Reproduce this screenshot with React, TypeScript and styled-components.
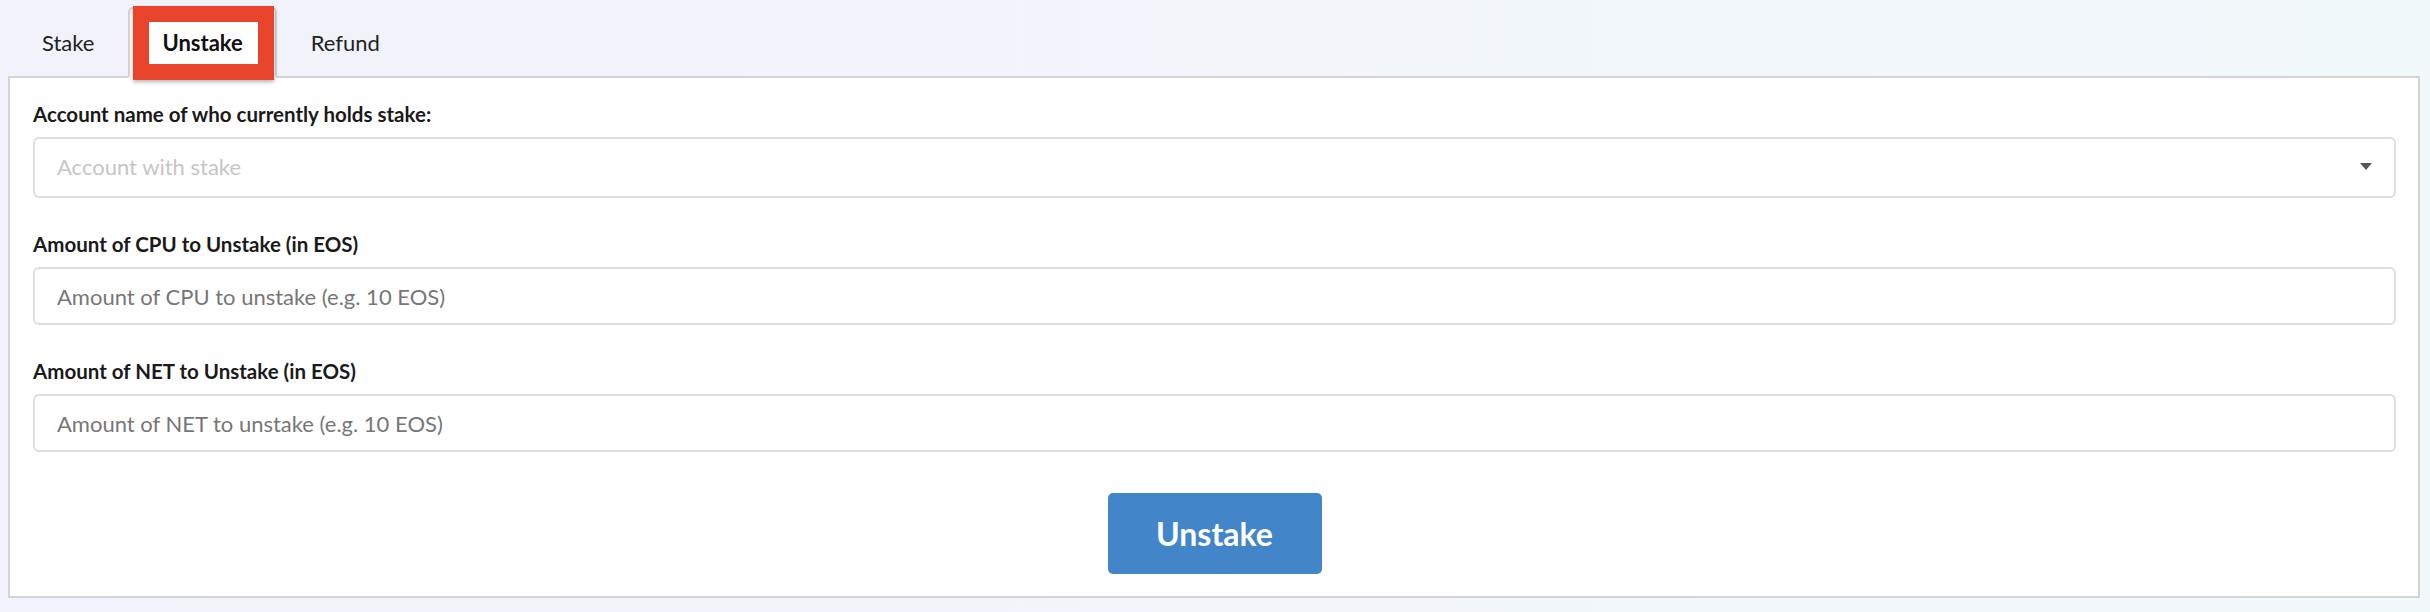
import React, { useState } from "react";
import styled, { createGlobalStyle } from "styled-components";

const tabs = ["Stake", "Unstake", "Refund"];

const fields = [
  {
    label: "Amount of CPU to Unstake (in EOS)",
    placeholder: "Amount of CPU to unstake (e.g. 10 EOS)",
  },
  {
    label: "Amount of NET to Unstake (in EOS)",
    placeholder: "Amount of NET to unstake (e.g. 10 EOS)",
  },
];

const App = () => {
  const [active, setActive] = useState(1);
  return (
    <>
      <GlobalStyle />
      <Page>
        <TabList>
          {tabs.map((t, i) => (
            <Tab key={t} selected={active === i} onClick={() => setActive(i)}>
              {t}
              {active === i && <Highlight />}
            </Tab>
          ))}
        </TabList>
        <Panel>
          <Group>
            <Label>Account name of who currently holds stake:</Label>
            <SelectBox>
              <SelectPlaceholder>Account with stake</SelectPlaceholder>
              <svg width="12" height="7" viewBox="0 0 12 7">
                <path d="M0 0 L12 0 L6 7 Z" fill="#555" />
              </svg>
            </SelectBox>
          </Group>
          {fields.map((f) => (
            <Group key={f.label}>
              <Label>{f.label}</Label>
              <Input placeholder={f.placeholder} />
            </Group>
          ))}
          <ButtonRow>
            <Button>Unstake</Button>
          </ButtonRow>
        </Panel>
      </Page>
    </>
  );
};

export default App;

const GlobalStyle = createGlobalStyle`
  html, body {
    margin: 0;
    min-height: 100%;
  }
  body {
    font-family: Lato, "Open Sans", sans-serif;
    background: linear-gradient(to right, #f1f2fb, #f2f9fb);
    min-height: 612px;
  }
`;

const Page = styled.div`
  padding: 7px 10px 15px 8px;
`;

const TabList = styled.ul`
  display: flex;
  margin: 0;
  padding: 0;
  list-style: none;
`;

const Tab = styled.li<{ selected: boolean }>`
  position: relative;
  z-index: 1;
  margin: 0 0 -2px 0;
  padding: 20px 32px 19px;
  font-size: 22px;
  line-height: 28px;
  font-weight: ${(p) => (p.selected ? 700 : 400)};
  color: ${(p) => (p.selected ? "#111" : "#222")};
  background: ${(p) => (p.selected ? "#fff" : "transparent")};
  border: 2px solid ${(p) => (p.selected ? "#d4d4d4" : "transparent")};
  border-bottom-color: ${(p) => (p.selected ? "#fff" : "transparent")};
  border-radius: 5px 5px 0 0;
  cursor: pointer;
`;

const Highlight = styled.span`
  position: absolute;
  top: -3px;
  left: 3px;
  right: 1px;
  height: 74px;
  box-sizing: border-box;
  border: 16px solid #e8432b;
  box-shadow: 0 2px 4px rgba(0, 0, 0, 0.3);
  pointer-events: none;
`;

const Panel = styled.div`
  background: #fff;
  border: 2px solid #d4d4d4;
  padding: 21px 22px 22px 23px;
`;

const Group = styled.div`
  margin-bottom: 31px;
`;

const Label = styled.div`
  font-size: 20.5px;
  line-height: 30px;
  font-weight: 700;
  color: #1a1a1a;
  margin-bottom: 8px;
`;

const SelectBox = styled.div`
  display: flex;
  align-items: center;
  justify-content: space-between;
  height: 61px;
  box-sizing: border-box;
  padding: 0 22px 2px 22px;
  border: 2px solid #dedede;
  border-radius: 6px;
  background: #fff;
`;

const SelectPlaceholder = styled.span`
  font-size: 22px;
  color: #c6c6c6;
`;

const Input = styled.input`
  display: block;
  width: 100%;
  height: 58px;
  box-sizing: border-box;
  padding: 0 22px;
  border: 2px solid #dedede;
  border-radius: 6px;
  font-family: Lato, "Open Sans", sans-serif;
  font-size: 22px;
  color: #333;
  outline: none;

  &::placeholder {
    color: #777;
  }
`;

const ButtonRow = styled.div`
  display: flex;
  justify-content: center;
  padding-top: 10px;
`;

const Button = styled.button`
  width: 214px;
  height: 81px;
  border: none;
  border-radius: 5px;
  background: #4285c9;
  color: #fff;
  font-family: Lato, "Open Sans", sans-serif;
  font-size: 32px;
  font-weight: 700;
  cursor: pointer;
`;
